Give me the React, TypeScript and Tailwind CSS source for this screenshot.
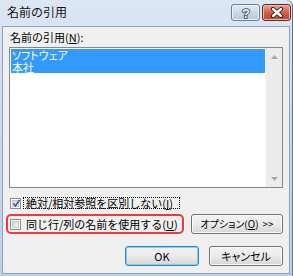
const font = "font-['Noto_Sans_CJK_JP','Noto_Sans',sans-serif]";
const palt = "[font-feature-settings:'palt']";

const CheckBox = ({ checked }: { checked: boolean }) => (
    <div className="w-[11px] h-[11px] shrink-0 border border-[#8e8f8f] bg-white p-[1px]">
        <div className="relative w-full h-full border border-[#c5c5c5] bg-gradient-to-br from-[#d8d8d8] to-[#f7f7f7]">
            {checked && (
                <svg className="absolute -left-[1px] -top-[2px]" width="9" height="9" viewBox="0 0 9 9">
                    <path d="M1.5 4.5 L3.5 7 L7.5 1" fill="none" stroke="#3b5a9a" strokeWidth="1.6" />
                </svg>
            )}
        </div>
    </div>
);

const Btn = ({ children, primary, w, size = "text-[11px]" }: { children: React.ReactNode; primary?: boolean; w: string; size?: string }) => (
    <div
        className={`${w} ${size} h-[20px] flex items-center justify-center rounded-[3px] border leading-[12px] ${palt} bg-gradient-to-b from-[#f2f2f2] via-[#ebebeb] to-[#d6d6d6] ${
            primary ? "border-[#3c7fb1] shadow-[inset_0_0_0_1px_#7fd0f5]" : "border-[#707070] shadow-[inset_0_0_0_1px_#fcfcfc]"
        }`}
    >
        {children}
    </div>
);

const App = () => {
    return (
        <div className={`w-[293px] h-[276px] overflow-hidden bg-white ${font} text-black`}>
            <div className="flex flex-col w-[293px] h-[276px] pl-[2px] pr-[3px] pb-[2px] rounded-tr-[6px] bg-gradient-to-b from-[#dce7f5] via-[#c9d8ec] to-[#bfd1e8] shadow-[inset_-1px_0_0_#5a7393]">
                {/* title bar */}
                <div className="flex h-[26px] items-start">
                    <span className="mt-[5px] ml-[5px] text-[12px] leading-[14px] text-[#111]">名前の引用</span>
                    <div className="ml-auto mt-[4px] mr-[-1px] flex gap-[2px]">
                        <div className="w-[29px] h-[17px] flex items-center justify-center rounded-[3px] border border-[#6b7f99] bg-gradient-to-b from-[#e4ecf6] via-[#cad8e9] to-[#b4c6dd] shadow-[inset_0_0_0_1px_#eef3fa]">
                            <svg width="14" height="14" viewBox="0 0 14 14">
                                <text x="7" y="12" textAnchor="middle" fontSize="13" fontWeight="bold" fontFamily="Liberation Sans, sans-serif" fill="#ffffff" stroke="#2d3e55" strokeWidth="1.6" paintOrder="stroke">?</text>
                            </svg>
                        </div>
                        <div className="w-[29px] h-[17px] flex items-center justify-center rounded-[3px] border border-[#6a2419] bg-gradient-to-b from-[#e7a79c] via-[#d0604f] to-[#c0412e] shadow-[inset_0_0_0_1px_#f0b9ae]">
                            <svg width="14" height="11" viewBox="0 0 14 11">
                                <path d="M3 2 L11 9 M11 2 L3 9" stroke="#3a1510" strokeWidth="4.2" strokeLinecap="round" />
                                <path d="M3 2 L11 9 M11 2 L3 9" stroke="#ffffff" strokeWidth="2.4" strokeLinecap="round" />
                            </svg>
                        </div>
                    </div>
                </div>

                {/* client area */}
                <div className="flex-1 flex flex-col border border-[#8ea1ba] bg-[#f0f0f0] px-[6px] pt-[4px] text-[11px] leading-[12px]">
                    <div className="pl-[1px] h-[12px]">
                        名前の引用(<span className="underline">N</span>):
                    </div>

                    <div className="mt-[4px] h-[141px] flex border border-[#828790] bg-white">
                        <div className="flex-1 pl-[1px] pt-[1px]">
                            <div className={`bg-[#3399ff] text-white pl-[1px] ${palt}`}>
                                <div className="h-[12px]">ソフトウェア</div>
                                <div className="h-[12px]">本社</div>
                            </div>
                        </div>
                        <div className="w-[17px] flex flex-col justify-between bg-[#ececec] border-l border-[#f9f9f9]">
                            <div className="h-[17px] flex items-center justify-center">
                                <svg width="7" height="4" viewBox="0 0 7 4">
                                    <path d="M3.5 0 L7 4 L0 4 Z" fill="#a8a8a8" />
                                </svg>
                            </div>
                            <div className="h-[17px] flex items-center justify-center">
                                <svg width="7" height="4" viewBox="0 0 7 4">
                                    <path d="M0 0 L7 0 L3.5 4 Z" fill="#a8a8a8" />
                                </svg>
                            </div>
                        </div>
                    </div>

                    <div className="mt-[9px] h-[12px] flex items-center ml-[1px]">
                        <CheckBox checked />
                        <div className="ml-[2px] w-[157px] h-[12px] border border-dotted border-black flex items-center pl-[2px]">
                            絶対/相対参照を区別しない(<span className="underline">I</span>)
                        </div>
                    </div>

                    <div className="mt-[5px] flex items-center">
                        <div className="-ml-[3px] w-[178px] h-[20px] flex items-center rounded-[5px] border-2 border-[#ec3a3f] pl-[2px]">
                            <CheckBox checked={false} />
                            <span className="ml-[5px]">
                                同じ行/列の名前を使用する(<span className="underline">U</span>)
                            </span>
                        </div>
                        <div className="ml-auto">
                            <Btn w="w-[92px]" size="text-[10px]">
                                オプション(<span className="underline">O</span>)<span className="ml-[4px]">&gt;&gt;</span>
                            </Btn>
                        </div>
                    </div>

                    <div className="mt-[12px] flex justify-end gap-[10px]">
                        <Btn w="w-[74px]" primary>
                            OK
                        </Btn>
                        <Btn w="w-[74px]">キャンセル</Btn>
                    </div>
                </div>
            </div>
        </div>
    );
};

export default App;
